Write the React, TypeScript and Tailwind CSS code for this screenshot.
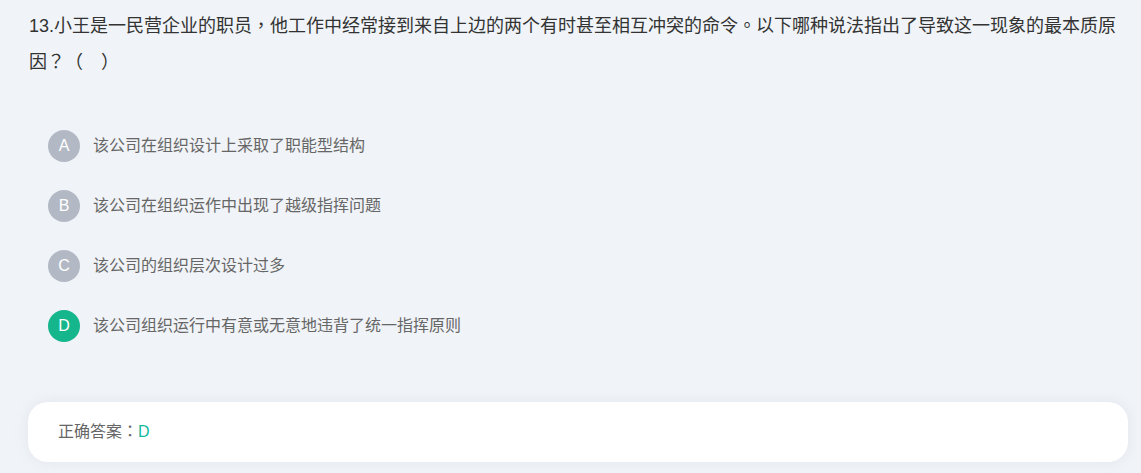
const options = [
  { key: 'A', text: '该公司在组织设计上采取了职能型结构' },
  { key: 'B', text: '该公司在组织运作中出现了越级指挥问题' },
  { key: 'C', text: '该公司的组织层次设计过多' },
  { key: 'D', text: '该公司组织运行中有意或无意地违背了统一指挥原则' },
];

const answer = 'D';

// centred full-width punctuation, like the original page
const punct = "font-['Liberation_Sans','Noto_Sans_CJK_TC',sans-serif]";

export default function App() {
  return (
    <div className="min-h-[473px] w-full bg-[#f0f3f7] pl-[28px] pr-[13px] pt-2 font-['Liberation_Sans','Noto_Sans_CJK_SC',sans-serif] text-[#333]">
      <p className="pl-px text-[18px] leading-[36px] text-[#333]">
        13.小王是一民营企业的职员<span className={punct}>，</span>他工作中经常接到来自上边的两个有时甚至相互冲突的命令<span className={punct}>。</span>以下哪种说法指出了导致这一现象的最本质原因<span className={punct}>？（　）</span>
      </p>

      <ul className="mt-[50px] flex flex-col gap-[28px] pl-[20px]">
        {options.map((o) => (
          <li key={o.key} className="flex h-8 items-center gap-[13px]">
            <span
              className={
                o.key === answer
                  ? 'flex h-8 w-8 shrink-0 items-center justify-center rounded-full bg-[#15b68c] text-[16px] text-white'
                  : 'flex h-8 w-8 shrink-0 items-center justify-center rounded-full bg-[#b3b9c4] text-[16px] text-white'
              }
            >
              {o.key}
            </span>
            <span className="text-[16px] text-[#666]">{o.text}</span>
          </li>
        ))}
      </ul>

      <div className="mt-[60px] flex h-[60px] items-center rounded-[20px] bg-white px-[30px] shadow-[0_0_12px_rgba(200,210,220,0.35)]">
        <span className="text-[16px] text-[#666]">
          正确答案<span className={punct}>：</span>
        </span>
        <span className="text-[16px] text-[#13b9a0]">{answer}</span>
      </div>
    </div>
  );
}
